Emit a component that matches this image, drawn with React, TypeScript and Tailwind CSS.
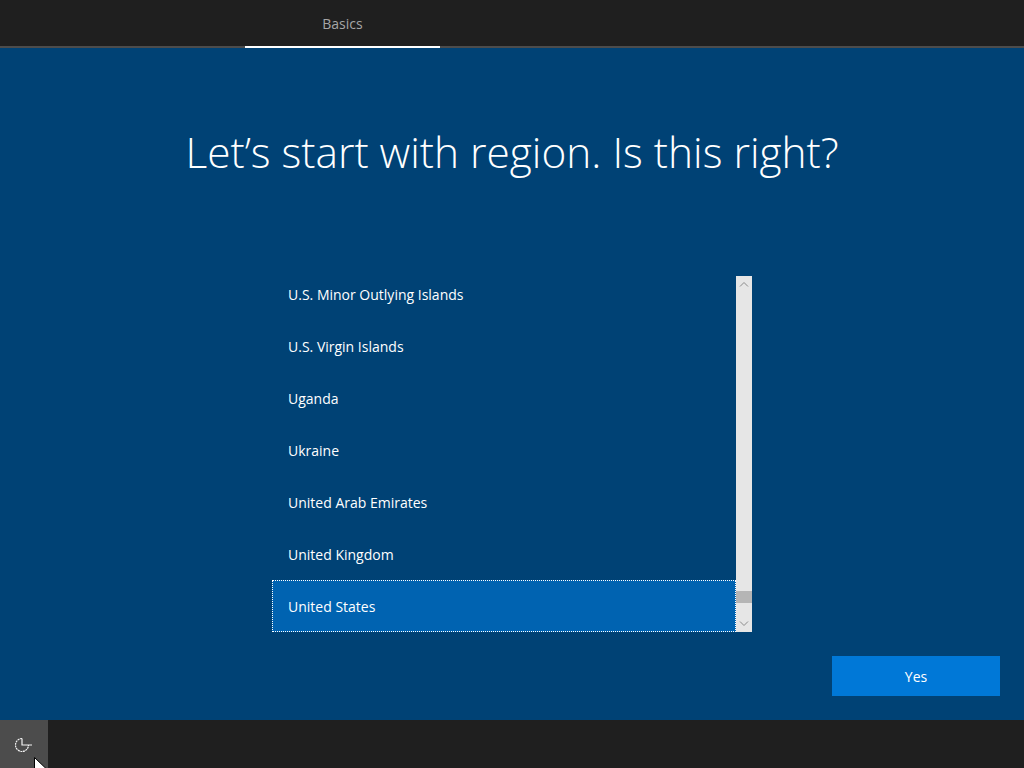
const font = "[font-family:'Open_Sans','Noto_Sans',sans-serif]";

const regions = [
  "U.S. Minor Outlying Islands",
  "U.S. Virgin Islands",
  "Uganda",
  "Ukraine",
  "United Arab Emirates",
  "United Kingdom",
];

function Scrollbar() {
  return (
    <div className="flex w-4 shrink-0 flex-col bg-[#e6e6e6]">
      <div className="flex h-4 shrink-0 items-center justify-center">
        <svg width="10" height="6" viewBox="0 0 10 6" fill="none" stroke="#8a8a8a" strokeWidth="1">
          <path d="M1 5.5 L5 1.5 L9 5.5" />
        </svg>
      </div>
      <div className="h-[299px] shrink-0" />
      <div className="h-3 shrink-0 bg-[#b5b5b5]" />
      <div className="flex-1" />
      <div className="flex h-4 shrink-0 items-center justify-center">
        <svg width="10" height="6" viewBox="0 0 10 6" fill="none" stroke="#8a8a8a" strokeWidth="1">
          <path d="M1 .5 L5 4.5 L9 .5" />
        </svg>
      </div>
    </div>
  );
}

export default function App() {
  return (
    <div className={`relative flex h-[768px] w-[1024px] flex-col overflow-hidden bg-[#004275] text-white ${font}`}>
      <header className="flex h-12 shrink-0 border-b-2 border-[#4c4c4c] bg-[#1f1f1f] pl-[245px]">
        <div className="-mb-0.5 flex h-12 w-[195px] items-center justify-center border-b-2 border-white pt-[1px] text-sm text-[#a6a6a6]">
          Basics
        </div>
      </header>

      <main className="flex flex-1 flex-col">
        <h1 className="mt-[72px] h-[64px] text-center text-[42.4px] leading-[64px] font-light">
          Let’s start with region. Is this right?
        </h1>

        <div className="mt-[92px] ml-[272px] flex h-[356px] w-[480px] overflow-hidden">
          <ul className="-mt-2 flex-1 text-sm">
            {regions.map((r) => (
              <li key={r} className="flex h-[52px] items-center pt-[2px] pl-4">
                {r}
              </li>
            ))}
            <li className="flex h-[52px] items-center border border-dotted border-white bg-[#0063b1] pt-[2px] pl-[15px]">
              United States
            </li>
          </ul>
          <Scrollbar />
        </div>

        <div className="mt-6 flex justify-end pr-6">
          <button type="button" className="h-10 w-[168px] bg-[#0078d7] pt-[1px] text-sm text-white">
            Yes
          </button>
        </div>
      </main>

      <footer className="flex h-12 shrink-0 bg-[#1f1f1f]">
        <button type="button" className="flex h-12 w-12 items-center justify-center bg-[#4c4c4c]">
          <svg className="mt-[2px]" width="18" height="18" viewBox="0 0 18 18" fill="none" stroke="#f2f2f2" strokeWidth="1.2">
            <path d="M7 2.5 A6.5 6.5 0 1 0 13.5 9" strokeDasharray="2 .6" />
            <path d="M7 2.5 V9 H17" />
          </svg>
        </button>
      </footer>

      <svg className="absolute top-[757px] left-[34px]" width="13" height="19" viewBox="0 0 13 19">
        <path d="M.5 .5 V16 L4.5 12.5 L7 18 L9.5 17 L7 11.5 H12 Z" fill="#fff" stroke="#000" strokeWidth="1" />
      </svg>
    </div>
  );
}
